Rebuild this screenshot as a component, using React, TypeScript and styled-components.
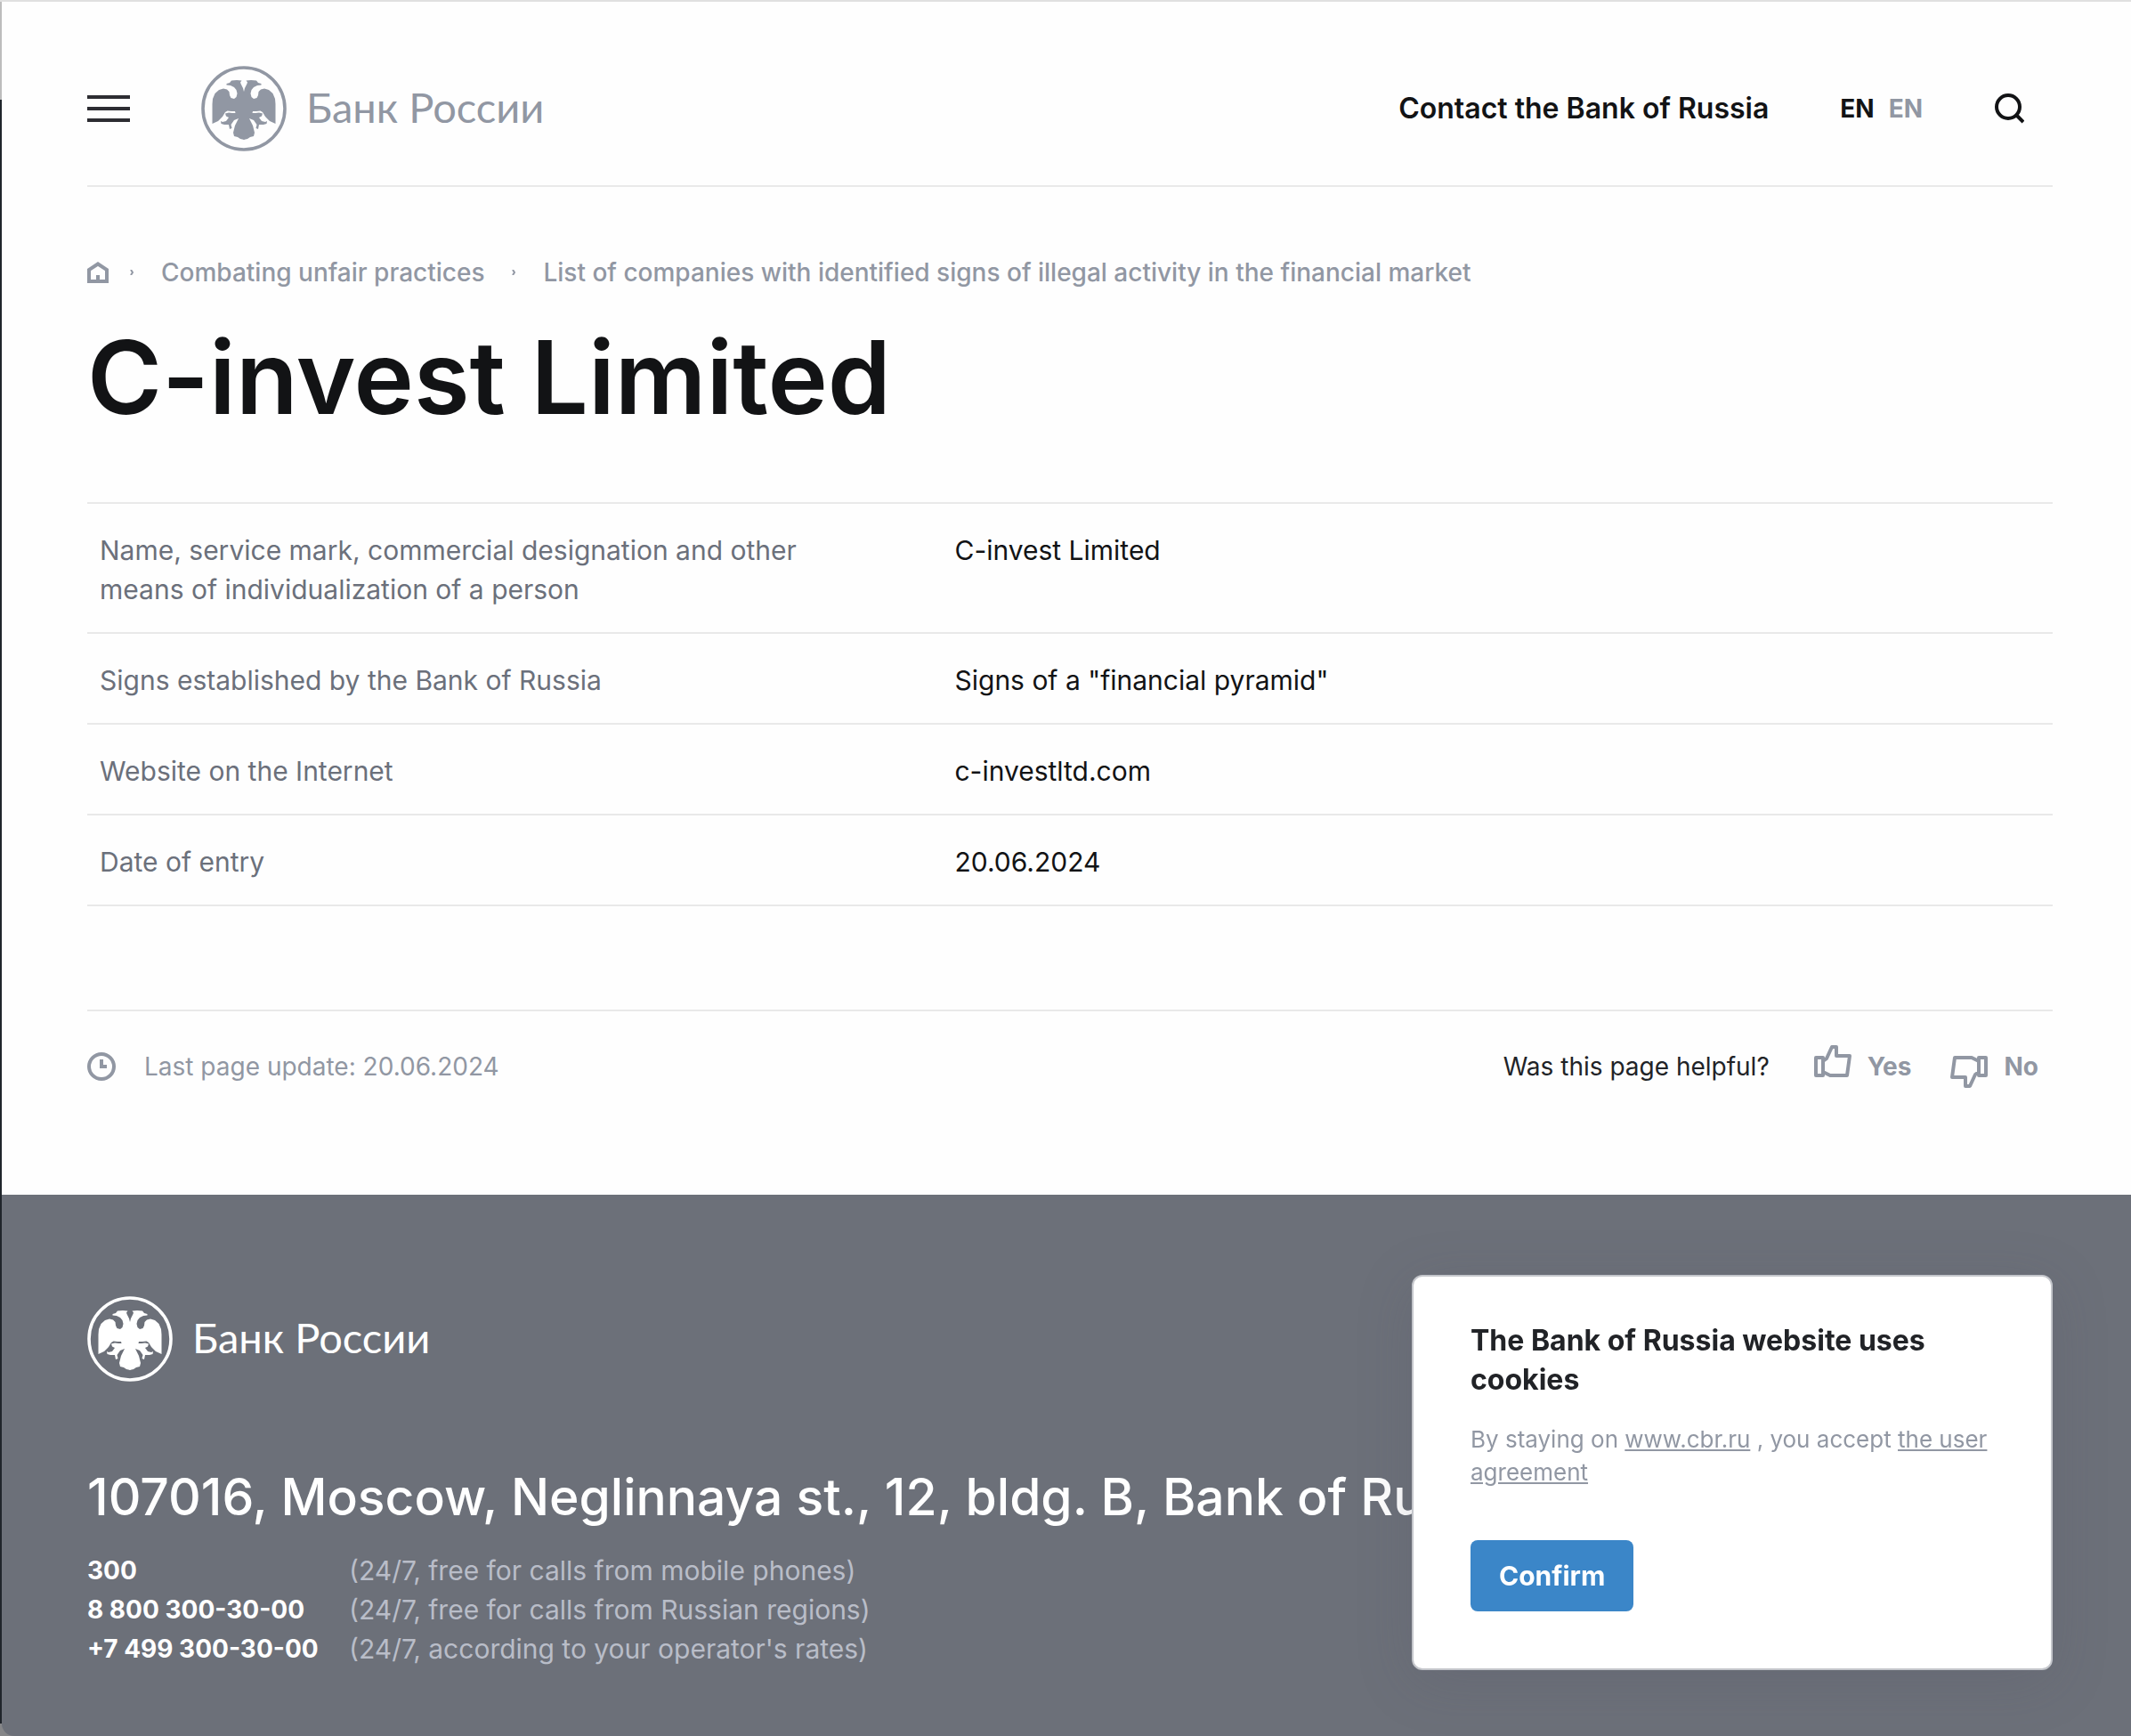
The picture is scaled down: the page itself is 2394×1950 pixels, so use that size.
import React from "react";
import styled, { createGlobalStyle } from "styled-components";

const ink = "#121315";
const grey = "#9197a3";
const slate = "#6b707b";
const rule = "#e9e9e9";

const Global = createGlobalStyle`
  *, *::before, *::after { box-sizing: border-box; }
  body { margin: 0; background: #fefefe; font-family: Inter, "Liberation Sans", sans-serif; color: ${ink}; }
  a { color: inherit; text-decoration: none; }
  button { border: 0; padding: 0; background: none; font: inherit; color: inherit; cursor: pointer; }
  h1, h2, p, ul, ol { margin: 0; padding: 0; list-style: none; }
  svg { display: block; flex: none; }
`;

const Page = styled.div`
  min-height: 100vh;
  display: flex;
  flex-direction: column;
  overflow: hidden;
  border-top: 2px solid #e0e0e0;
  padding-left: 2px;
  background: linear-gradient(#bdbdbd 110px, #20252b 110px, #20252b calc(100% - 14px), #858688 calc(100% - 14px));
`;
const Wrap = styled.div`
  padding: 0 88px 0 96px;
  background: #fefefe;
`;
const Header = styled.header`
  display: flex;
  align-items: center;
  height: 208px;
  padding-top: 34px;
  border-bottom: 2px solid ${rule};
`;
const Burger = styled.button`
  display: grid;
  gap: 9px;
  width: 48px;
  margin-right: 80px;
`;
const Bar = styled.span`
  height: 4px;
  background: #2d2d32;
`;
const LogoLink = styled.a<{ $light?: boolean }>`
  display: inline-flex;
  align-items: center;
  gap: 22px;
  color: ${(p) => (p.$light ? "#fff" : grey)};
`;
const LogoText = styled.span`
  padding-bottom: 4px;
  font: 400 47px/56px Lato, "Open Sans", sans-serif;
`;
const HeaderTools = styled.div`
  display: flex;
  align-items: center;
  margin-left: auto;
  padding-right: 32px;
`;
const Contact = styled.a`
  font-size: 32px;
  line-height: 44px;
  font-weight: 600;
  margin-right: 80px;
`;
const Lang = styled.a<{ $muted?: boolean }>`
  font-size: 28px;
  line-height: 44px;
  font-weight: 700;
  color: ${(p) => (p.$muted ? grey : ink)};
  margin-right: ${(p) => (p.$muted ? 80 : 16)}px;
`;
const Crumbs = styled.ol`
  display: flex;
  align-items: center;
  height: 44px;
  margin-top: 74px;
  color: ${grey};
  font-size: 28px;
  line-height: 44px;
  font-weight: 500;
`;
const Crumb = styled.li`
  display: flex;
  align-items: center;
`;
const Chevron = styled.svg`
  margin: 0 31px;
`;
const HomeChevron = styled(Chevron)`
  margin-left: 24px;
`;
const Title = styled.h1`
  font-size: 114px;
  line-height: 140px;
  font-weight: 600;
  margin-top: 26px;
`;
const Facts = styled.table`
  width: 100%;
  margin-top: 70px;
  border-collapse: collapse;
  border-top: 2px solid ${rule};
  font-size: 30px;
  line-height: 44px;
`;
const FactRow = styled.tr`
  border-bottom: 2px solid ${rule};
`;
const FactName = styled.th`
  width: 43.5%;
  padding: 30px 160px 26px 14px;
  font-weight: 400;
  text-align: left;
  vertical-align: top;
  color: ${slate};
`;
const FactValue = styled.td`
  padding: 30px 14px 26px 14px;
  vertical-align: top;
`;
const Meta = styled.div`
  display: flex;
  align-items: flex-start;
  height: 208px;
  margin-top: 116px;
  padding: 40px 16px 0 0;
  border-top: 2px solid ${rule};
  font-size: 28px;
  line-height: 44px;
`;
const Updated = styled.p`
  display: flex;
  align-items: center;
  gap: 32px;
  color: ${grey};
`;
const Helpful = styled.div`
  display: flex;
  align-items: center;
  margin-left: auto;
`;
const Question = styled.span`
  margin-right: 50px;
  color: #212327;
`;
const Vote = styled.button`
  display: flex;
  align-items: center;
  gap: 18px;
  color: ${grey};
  font-weight: 700;
  & + & { margin-left: 44px; }
  svg { margin: -2px 0; }
`;
const Footer = styled.footer`
  flex: 1;
  padding: 114px 88px 72px 96px;
  border-bottom-left-radius: 14px;
  background: #6c7079;
  color: #fff;
`;
const Address = styled.p`
  margin-top: 88px;
  font-size: 57px;
  line-height: 76px;
  font-weight: 450;
  white-space: nowrap;
`;
const Phones = styled.dl`
  display: grid;
  grid-template-columns: 294px 1fr;
  margin: 22px 0 0;
  font-size: 30px;
  line-height: 44px;
`;
const Phone = styled.dt`
  font-size: 28px;
  font-weight: 700;
`;
const PhoneNote = styled.dd`
  margin: 0;
  color: #b9bdc8;
`;
const Cookie = styled.aside`
  position: fixed;
  right: 88px;
  bottom: 74px;
  width: 720px;
  padding: 50px 64px 64px;
  border: 2px solid #c4c6cb;
  border-radius: 12px;
  background: #fff;
  box-shadow: 0 12px 64px rgba(80, 80, 100, 0.2);
`;
const CookieTitle = styled.h2`
  font-size: 32px;
  line-height: 44px;
  font-weight: 700;
  color: #212327;
`;
const CookieText = styled.p`
  margin-top: 26px;
  font-size: 26px;
  line-height: 37px;
  color: ${grey};
  a { text-decoration: underline; }
`;
const Confirm = styled.button`
  margin-top: 58px;
  height: 80px;
  padding: 0 32px;
  border-radius: 8px;
  background: #3b86c8;
  color: #fff;
  font-size: 30px;
  font-weight: 700;
`;

function Logo({ light }: { light?: boolean }) {
  const id = light ? "half-light" : "half-dark";
  return (
    <LogoLink href="#" $light={light}>
      <svg width="96" height="96" viewBox="0 0 96 96" aria-hidden="true">
        <circle cx="48" cy="48" r="46" fill="none" stroke="currentColor" strokeWidth="3.6" />
        <defs>
          <path
            id={id}
            d="M48.500 31L47 25 44.500 20 44 18.500 45.500 16.500 40 16 34 16.500 32 19 28.500 20 28.500 21.500 33 22 37 24 39.500 27 40.500 31 39.500 35 37 37 33.500 36 32 33 31.500 29 29 26.500 25 25.500 20 27 15.500 31 13 37 12.500 43 12.500 65 19 62 24 57 27 52 29.500 50.500 34 51 38 51 38.500 53 35 53 31 52.500 27 53.500 28 56.500 31 58 28 62 24 63 22 62 22.500 65 26 66 31 66 32 71 34.500 70 33.500 66 37 61 42 59 38 67 36 75 37 79 41 80 44 82 48.500 83Z"
          />
        </defs>
        <g fill="currentColor">
          <use href={`#${id}`} />
          <use href={`#${id}`} transform="matrix(-1 0 0 1 96 0)" />
        </g>
      </svg>
      <LogoText>Банк России</LogoText>
    </LogoLink>
  );
}

const Thumb = ({ down }: { down?: boolean }) => (
  <svg width="42" height="48" viewBox="0 0 42 48" fill="none" stroke="currentColor" strokeWidth="4" strokeLinejoin="round" aria-hidden="true">
    <g transform={down ? "rotate(180 21 24)" : undefined}>
      <path d="M2 14h8v20H2zM10 18l4-3 6-13h5v10h15l-3 22H18l-8-4" />
    </g>
  </svg>
);

const Arrow = () => <path d="M1 0l2 3-2 3" fill="none" stroke="currentColor" strokeWidth="2" />;

const facts = [
  ["Name, service mark, commercial designation and other means of individualization of a person", "C-invest Limited"],
  ["Signs established by the Bank of Russia", 'Signs of a "financial pyramid"'],
  ["Website on the Internet", "c-investltd.com"],
  ["Date of entry", "20.06.2024"],
];
const phones = [
  ["300", "(24/7, free for calls from mobile phones)"],
  ["8 800 300-30-00", "(24/7, free for calls from Russian regions)"],
  ["+7 499 300-30-00", "(24/7, according to your operator's rates)"],
];

export default function App() {
  return (
    <>
      <Global />
      <Page>
        <Wrap>
          <Header>
            <Burger aria-label="Menu"><Bar /><Bar /><Bar /></Burger>
            <Logo />
            <HeaderTools>
              <Contact href="#">Contact the Bank of Russia</Contact>
              <Lang href="#">EN</Lang>
              <Lang href="#" $muted>EN</Lang>
              <button aria-label="Search">
                <svg width="34" height="34" viewBox="0 0 34 34" fill="none" stroke={ink} strokeWidth="4">
                  <circle cx="16" cy="15" r="13" />
                  <path d="M25 24l8 8" />
                </svg>
              </button>
            </HeaderTools>
          </Header>
          <main>
            <nav aria-label="Breadcrumb">
              <Crumbs>
                <Crumb>
                  <a href="#" aria-label="Home">
                    <svg width="24" height="26" viewBox="0 0 24 26" fill="none" stroke="currentColor" strokeWidth="4">
                      <path d="M2 23V10L12 3.500l10 6.500v13zM12 23v-7" />
                    </svg>
                  </a>
                  <HomeChevron width="4" height="6"><Arrow /></HomeChevron>
                </Crumb>
                <Crumb>
                  <a href="#">Combating unfair practices</a>
                  <Chevron width="4" height="6"><Arrow /></Chevron>
                </Crumb>
                <Crumb>
                  <a href="#">List of companies with identified signs of illegal activity in the financial market</a>
                </Crumb>
              </Crumbs>
            </nav>
            <Title>C-invest Limited</Title>
            <Facts>
              <tbody>
                {facts.map(([name, value]) => (
                  <FactRow key={name}>
                    <FactName scope="row">{name}</FactName>
                    <FactValue>{value}</FactValue>
                  </FactRow>
                ))}
              </tbody>
            </Facts>
            <Meta>
              <Updated>
                <svg width="32" height="32" viewBox="0 0 32 32" fill="none" stroke="currentColor" strokeWidth="4" aria-hidden="true">
                  <circle cx="16" cy="16" r="14" />
                  <path d="M16 8v8h6" />
                </svg>
                Last page update: 20.06.2024
              </Updated>
              <Helpful>
                <Question>Was this page helpful?</Question>
                <Vote><Thumb />Yes</Vote>
                <Vote><Thumb down />No</Vote>
              </Helpful>
            </Meta>
          </main>
        </Wrap>
        <Footer>
          <Logo light />
          <Address>107016, Moscow, Neglinnaya st., 12, bldg. B, Bank of Russia</Address>
          <Phones>
            {phones.map(([number, note]) => (
              <React.Fragment key={number}>
                <Phone>{number}</Phone>
                <PhoneNote>{note}</PhoneNote>
              </React.Fragment>
            ))}
          </Phones>
        </Footer>
      </Page>
      <Cookie aria-label="Cookies">
        <CookieTitle>The Bank of Russia website uses cookies</CookieTitle>
        <CookieText>
          By staying on <a href="#">www.cbr.ru</a> , you accept <a href="#">the user agreement</a>
        </CookieText>
        <Confirm>Confirm</Confirm>
      </Cookie>
    </>
  );
}
